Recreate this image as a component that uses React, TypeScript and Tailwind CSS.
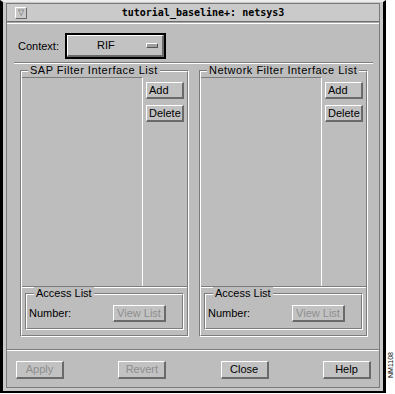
import React from 'react'

const sans = "font-['Liberation_Sans',Arial,sans-serif]"

function RaisedButton({
  label,
  disabled = false,
  className = '',
  left = false,
}: {
  label: string
  disabled?: boolean
  className?: string
  left?: boolean
}) {
  return (
    <div
      className={`flex items-center bg-[#c2c2c2] border-t border-l border-t-white border-l-white border-b-2 border-r-2 border-b-[#6a6a6a] border-r-[#6a6a6a] text-[11px] leading-none ${
        left ? 'justify-start pl-[2px]' : 'justify-center'
      } ${disabled ? 'text-[#8e8e8e]' : 'text-black'} ${className}`}
    >
      {label}
    </div>
  )
}

function Etched({ className = '', children }: { className?: string; children?: React.ReactNode }) {
  return (
    <div className={`relative border border-t-[#7c7c7c] border-l-[#7c7c7c] border-b-white border-r-white ${className}`}>
      <div className="h-full border border-t-white border-l-white border-b-[#7c7c7c] border-r-[#7c7c7c] flex flex-col">
        {children}
      </div>
    </div>
  )
}

function FilterFrame({ title }: { title: string }) {
  return (
    <Etched className="w-[169px] h-[267px]">
      <div className="flex h-[214px] pt-[5px]">
        {/* list area */}
        <div className="w-[121px] h-full border-t border-t-[#7c7c7c] border-r border-r-white" />
        <div className="flex flex-col gap-[6px] pl-[3px] pt-[5px]">
          <RaisedButton label="Add" left className="w-[38px] h-[17px]" />
          <RaisedButton label="Delete" left className="w-[38px] h-[17px]" />
        </div>
      </div>
      <div className="h-[2px] border-t border-t-[#7c7c7c] border-b border-b-white" />
      <Etched className="mx-[3px] mt-[5px] h-[37px]">
        <div className="flex items-center pt-[10px] pl-[2px]">
          <span className="w-[84px] text-[11px] leading-none">Number:</span>
          <RaisedButton label="View List" disabled className="w-[53px] h-[17px]" />
        </div>
        <span className="absolute left-[8px] -top-[7px] px-[2px] bg-[#bdbdbd] text-[11px] leading-[13px]">
          Access List
        </span>
      </Etched>
      <span className="absolute left-[7px] -top-[7px] px-[2px] bg-[#bdbdbd] text-[11px] leading-[13px] tracking-[0.5px]">
        {title}
      </span>
    </Etched>
  )
}

export default function App() {
  return (
    <div className={`relative w-[395px] h-[394px] bg-white text-black ${sans}`}>
      {/* window frame */}
      <div className="w-[386px] h-[393px] bg-[#c8c8c8] border-t-2 border-t-[#ececec] border-l-[3px] border-l-black border-r-[3px] border-r-black border-b-2 border-b-black px-[3px] pt-[1px] pb-[3px]">
        <div className="h-full flex flex-col border border-[#7a7a7a] bg-[#bdbdbd]">
          {/* title bar */}
          <div className="h-[17px] flex items-center bg-[#cacaca]">
            <div className="ml-[8px] w-[12px] h-[12px] flex items-center justify-center border-t border-l border-t-white border-l-white border-b border-r border-b-[#6a6a6a] border-r-[#6a6a6a] text-[8px] leading-none text-[#555]">
              ▽
            </div>
            <div className="flex-1 text-center font-['DejaVu_Sans_Mono',monospace] font-bold text-[10px] leading-none">
              tutorial_baseline+: netsys3
            </div>
          </div>
          <div className="h-[3px] border-t border-t-[#6e6e6e] border-b border-b-white bg-[#a8a8a8]" />

          {/* context row */}
          <div className="mt-[9px] flex items-center pl-[11px]">
            <span className="w-[47px] text-[11px] leading-none">Context:</span>
            <div className="w-[101px] h-[26px] border-2 border-black">
              <div className="h-full flex items-center bg-[#c2c2c2] border-t border-l border-t-white border-l-white border-b-2 border-r-2 border-b-[#6a6a6a] border-r-[#6a6a6a]">
                <span className="pl-[29px] text-[11px] leading-none">RIF</span>
                <div className="ml-auto mr-[4px] w-[12px] h-[5px] bg-[#a0a0a0] border-t border-l border-t-white border-l-white border-b border-r border-b-[#555] border-r-[#555]" />
              </div>
            </div>
          </div>

          <div className="mt-[3px] ml-[7px] mr-[6px] h-[2px] border-t border-t-[#7c7c7c] border-b border-b-white" />

          {/* filter lists */}
          <div className="mt-[6px] flex gap-[10px] pl-[13px]">
            <FilterFrame title="SAP Filter Interface List" />
            <FilterFrame title="Network Filter Interface List" />
          </div>

          <div className="mt-[12px] h-[2px] border-t border-t-[#7c7c7c] border-b border-b-white" />

          {/* action buttons */}
          <div className="mt-[10px] flex justify-between pl-[9px] pr-[8px]">
            <RaisedButton label="Apply" disabled className="w-[48px] h-[18px]" />
            <RaisedButton label="Revert" disabled className="w-[48px] h-[18px]" />
            <RaisedButton label="Close" className="w-[48px] h-[18px]" />
            <RaisedButton label="Help" className="w-[48px] h-[18px]" />
          </div>
        </div>
      </div>

      <span className="absolute right-[1px] top-[352px] text-[7px] leading-none [writing-mode:vertical-rl] rotate-180">
        NM1108
      </span>
    </div>
  )
}
